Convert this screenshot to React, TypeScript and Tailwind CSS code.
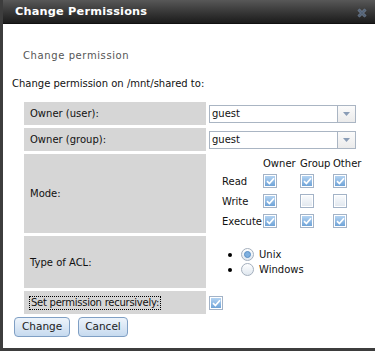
const rows = [
  { label: "Read", v: [true, true, true] },
  { label: "Write", v: [true, false, false] },
  { label: "Execute", v: [true, true, true] },
];

function Check({ on }: { on: boolean }) {
  return (
    <span className="inline-flex w-[14px] h-[14px] border border-[#a3b3c7] bg-white p-px">
      {on ? (
        <span className="flex-1 flex items-center justify-center bg-gradient-to-b from-[#b3d3f2] to-[#6fa3d7]">
          <svg width="9" height="8" viewBox="0 0 9 8">
            <path d="M1 4.2 L3.4 6.6 L8 1.2" stroke="#fff" strokeWidth="1.7" fill="none" />
          </svg>
        </span>
      ) : (
        <span className="flex-1 bg-gradient-to-b from-[#f8fafc] to-[#e2e8ef]" />
      )}
    </span>
  );
}

function Radio({ on }: { on: boolean }) {
  return (
    <span className="inline-flex items-center justify-center w-[13px] h-[13px] rounded-full border border-[#a4afbd] bg-gradient-to-b from-white to-[#dfe7ef]">
      {on && <span className="w-[7px] h-[7px] rounded-full border border-[#5b8fc4] bg-[#7fb0df]" />}
    </span>
  );
}

function Select({ value }: { value: string }) {
  return (
    <div className="flex w-[147px] h-[18px] border border-[#aab5c3] bg-white">
      <span className="flex-1 pl-[2px] leading-[16px]">{value}</span>
      <span className="w-[18px] flex items-center justify-center border-l border-[#aab5c3] bg-gradient-to-b from-[#fbfbfb] to-[#ebebeb]">
        <svg width="7" height="4" viewBox="0 0 7 4">
          <path d="M0 0 H7 L3.5 4 Z" fill="#8a9db6" />
        </svg>
      </span>
    </div>
  );
}

export default function App() {
  return (
    <div className="w-[375px] h-[351px] overflow-hidden bg-[#3d3d3d] pl-[3px] pb-[3px] font-['DejaVu_Sans',sans-serif] text-[10px] text-[#111]">
      <div className="h-full flex flex-col bg-white">
        <div className="h-[24px] shrink-0 flex items-center justify-between pt-[2px] pl-[12px] pr-[8px] bg-gradient-to-b from-[#585858] to-[#1c1c1c] border-b border-[#111]">
          <span className="text-white font-bold text-[11.3px] tracking-[0.2px]">Change Permissions</span>
          <svg width="10" height="10" viewBox="0 0 10 10" className="opacity-80">
            <path d="M1.5 1.5 L8.5 8.5 M8.5 1.5 L1.5 8.5" stroke="#7d8ea4" strokeWidth="3" />
            <path d="M1.5 1.5 L8.5 8.5 M8.5 1.5 L1.5 8.5" stroke="#5a6d86" strokeWidth="1.6" />
          </svg>
        </div>

        <div className="mt-[26px] ml-[20px] leading-[12px] tracking-[0.6px] text-[#555]">Change permission</div>
        <div className="mt-[16px] ml-[9px] leading-[12px]">Change permission on /mnt/shared to:</div>

        <div className="mt-[12px] ml-[21px] grid grid-cols-[182px_1fr] gap-[3px]">
          <div className="h-[23px] bg-[#d6d6d6] pl-[6px] flex items-center">Owner (user):</div>
          <div className="flex items-center">
            <Select value="guest" />
          </div>

          <div className="h-[23px] bg-[#d6d6d6] pl-[6px] flex items-center">Owner (group):</div>
          <div className="flex items-center">
            <Select value="guest" />
          </div>

          <div className="h-[79px] bg-[#d6d6d6] pl-[6px] flex items-center">Mode:</div>
          <div className="pl-[11px] pt-[3px]">
            <div className="grid grid-cols-[43px_37px_33px_30px]">
              <span />
              <span className="h-[14px] leading-[14px]">Owner</span>
              <span className="h-[14px] leading-[14px]">Group</span>
              <span className="h-[14px] leading-[14px]">Other</span>
              {rows.map((r) => (
                <>
                  <span key={r.label} className="h-[20px] pl-[2px] flex items-center">{r.label}</span>
                  {r.v.map((on, i) => (
                    <span key={r.label + i} className="h-[20px] flex items-center">
                      <Check on={on} />
                    </span>
                  ))}
                </>
              ))}
            </div>
          </div>

          <div className="h-[52px] bg-[#d6d6d6] pl-[6px] flex items-center">Type of ACL:</div>
          <div className="flex flex-col justify-center pl-[19px]">
            {[
              { t: "Unix", on: true },
              { t: "Windows", on: false },
            ].map((o) => (
              <div key={o.t} className="h-[15px] flex items-center">
                <span className="w-[4px] h-[4px] rounded-full bg-black" />
                <span className="ml-[9px] flex">
                  <Radio on={o.on} />
                </span>
                <span className="ml-[5px]">{o.t}</span>
              </div>
            ))}
          </div>

          <div className="h-[23px] bg-[#d6d6d6] pl-[5px] flex items-center">
            <span className="border border-dotted border-black px-px leading-[12px] tracking-[-0.25px]">Set permission recursively:</span>
          </div>
          <div className="flex items-center">
            <Check on={true} />
          </div>
        </div>

        <div className="mt-[3px] ml-[11px] flex gap-[8px]">
          <button className="h-[20px] px-[7px] rounded-[4px] border border-[#7f9fc4] bg-gradient-to-b from-[#eef4fb] to-[#c6daef] text-[10.5px] text-[#222]">Change</button>
          <button className="h-[20px] px-[6px] rounded-[4px] border border-[#7f9fc4] bg-gradient-to-b from-[#eef4fb] to-[#c6daef] text-[10.5px] text-[#222]">Cancel</button>
        </div>
      </div>
    </div>
  );
}
